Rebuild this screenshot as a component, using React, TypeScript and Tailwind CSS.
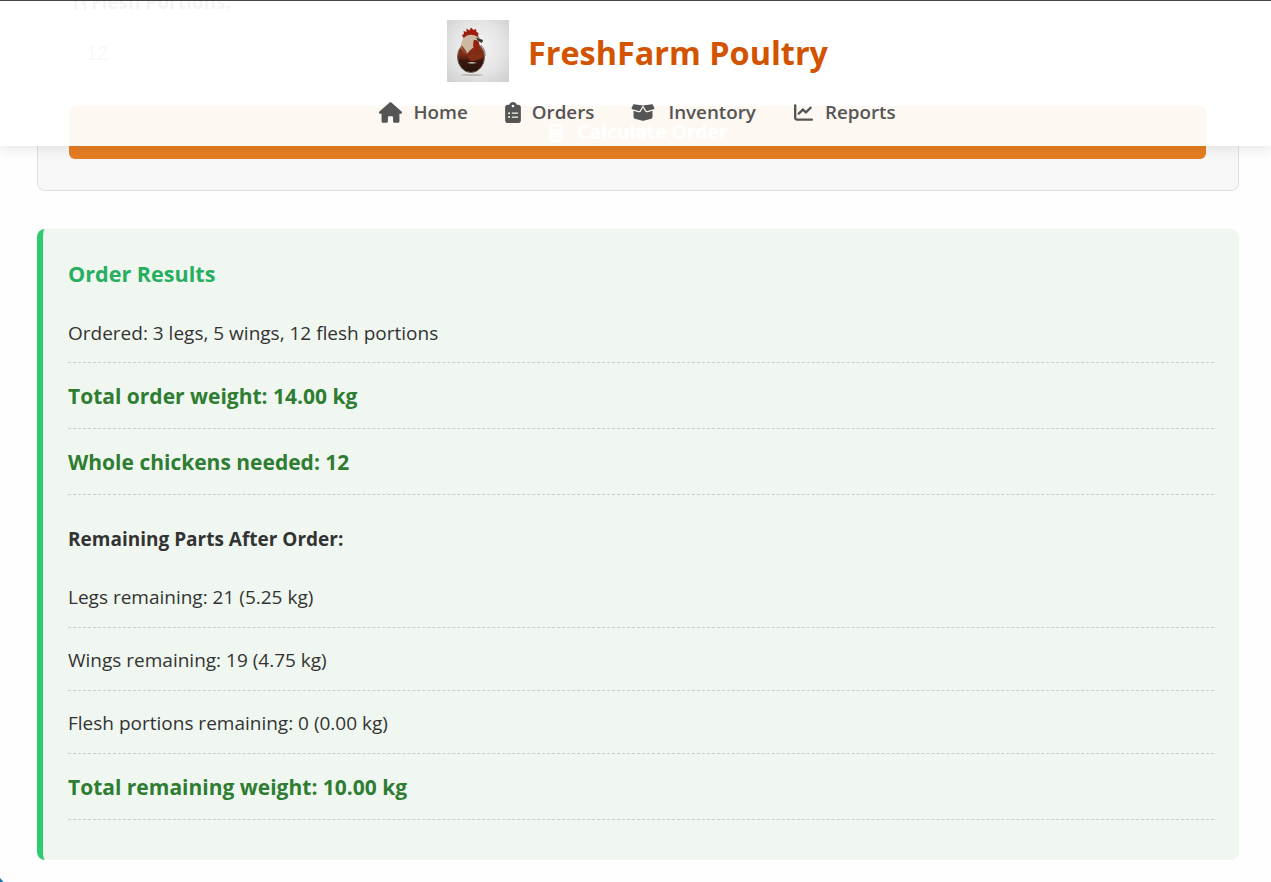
import type { ReactNode } from "react";
import { FaHouse, FaClipboardList, FaBoxOpen, FaChartLine, FaCalculator, FaUtensils } from "react-icons/fa6";

function Logo() {
  return (
    <svg width="62" height="62" viewBox="0 0 62 62" className="shrink-0">
      <defs>
        <radialGradient id="bg" cx="50%" cy="45%" r="70%">
          <stop offset="0%" stopColor="#f5f5f5" />
          <stop offset="60%" stopColor="#e4e4e4" />
          <stop offset="100%" stopColor="#d0d0d0" />
        </radialGradient>
        <linearGradient id="egg" x1="0" y1="0" x2="0" y2="1">
          <stop offset="0%" stopColor="#8f3319" />
          <stop offset="45%" stopColor="#7a2c17" />
          <stop offset="62%" stopColor="#3a1810" />
          <stop offset="100%" stopColor="#26100b" />
        </linearGradient>
        <filter id="soft"><feGaussianBlur stdDeviation="0.45" /></filter>
      </defs>
      <rect width="62" height="62" fill="url(#bg)" />
      <g filter="url(#soft)">
        <ellipse cx="25" cy="55" rx="11" ry="1.1" fill="#bdb6b2" />
        <ellipse cx="24" cy="37" rx="13.5" ry="15.5" fill="url(#egg)" stroke="#71655e" strokeWidth="0.9" />
        <path d="M15 15 L17 14 L16.5 11 L19.5 12 L19.5 8.5 L22.5 10.5 L24 7.5 L26.5 10 L29 9 L29.5 12 L31.5 13 L31 16 L33 19 L28 16 L21 16 L17 19 Z" fill="#9c1a10" />
        <path d="M19 16 C24 13.5 29 15 32 18 L30 21 L28 27 C25 28 22 31 20 34 C16 31.5 13.5 29 14 25 C14.5 21 16 18 19 16 Z" fill="#cdb8a3" />
        <path d="M14.5 25 C17 28 19 30 20.5 34 C17 33 14 30 14.5 25 Z" fill="#8a4a2c" />
        <path d="M29 17.5 L36 20 L35 23 L31 21 Z" fill="#353231" />
        <path d="M27 20 C31 19.5 33 22 32 26 C31.5 29 30 31 28.5 31 C26 29 25.5 24 27 20 Z" fill="#94200f" />
        <path d="M21 36 C26 33 32 33 37 34 C36 38 32 40 26 41 C23 41 21 39 21 36 Z" fill="#842e16" />
        <path d="M20 43 C23 41.5 26 41.5 30 43 L25 43.8 Z" fill="#c9b8a8" />
        <path d="M34 25 C37 28 38.5 32 38 36" fill="none" stroke="#7a6e68" strokeWidth="0.9" />
      </g>
    </svg>
  );
}

function NavItem({ icon, label, gap }: { icon: ReactNode; label: string; gap: string }) {
  return (
    <a className={`flex items-center ${gap} text-[18.8px] leading-none font-semibold text-[#555555]`}>
      {icon}
      <span>{label}</span>
    </a>
  );
}

export default function App() {
  return (
    <div className="relative h-[882px] w-[1271px] overflow-hidden bg-[#fefefe] font-['Open_Sans','Noto_Sans',sans-serif]">
      <header className="absolute top-0 right-0 left-0 z-10 flex h-[146px] flex-col items-center border-t border-[#444444] bg-white/95 shadow-[0_2px_14px_rgba(0,0,0,0.11)]">
        <div className="mt-[19px] ml-[4px] flex items-center gap-[19px]">
          <Logo />
          <h1 className="mt-[3px] text-[32.4px] leading-none font-bold text-[#d35400]">FreshFarm Poultry</h1>
        </div>
        <nav className="mt-[19px] ml-[4px] flex items-center gap-[37px]">
          <NavItem icon={<FaHouse className="size-[23px]" />} label="Home" gap="gap-[11px]" />
          <NavItem icon={<FaClipboardList className="h-[21px] w-[16px]" />} label="Orders" gap="gap-[11px]" />
          <NavItem icon={<FaBoxOpen className="h-[19px] w-[24px]" />} label="Inventory" gap="gap-[13px]" />
          <NavItem icon={<FaChartLine className="h-[19px] w-[21px]" />} label="Reports" gap="gap-[11px]" />
        </nav>
      </header>

      <main className="flex flex-col pr-[32px] pl-[37px]">
        <section className="-mt-[20px] flex h-[211px] flex-col rounded-b-lg border border-t-0 border-[#e0e0e0] bg-[#f8f8f8] pr-[32px] pl-[31px]">
          <label className="flex h-[47px] items-start gap-1 pt-[9px] pl-[2px] text-[19px] leading-[26px] font-bold text-[#333333]">
            <FaUtensils className="mt-[5px] size-[16px]" /> Flesh Portions:
          </label>
          <div className="flex h-[53px] items-center rounded border border-[#dddddd] bg-white px-4 pb-[2px] font-['Liberation_Sans',sans-serif] text-[20px] text-[#666666]">12</div>
          <button className="mt-[26px] flex h-[53px] items-center justify-center gap-3 rounded-md bg-[#e67e22] text-[19.2px] font-bold text-white">
            <FaCalculator className="size-[18px]" /> Calculate Order
          </button>
        </section>

        <section className="mt-[38px] flex h-[631px] flex-col rounded-lg border-l-[6px] border-[#2ecc71] bg-[#f0f7f0] pr-[25px] pl-[25px] text-[19px] text-[#333333]">
          <h3 className="mt-[30px] h-[30px] text-[21.6px] leading-[30px] font-bold text-[#27ae60]">Order Results</h3>
          <div className="mt-[13px] flex h-[61px] items-end border-b border-dashed border-[#cccccc] pb-[15px]">Ordered: 3 legs, 5 wings, 12 flesh portions</div>
          <div className="flex h-[66px] items-center border-b border-dashed border-[#cccccc] pt-[2px] text-[21px] font-bold text-[#2e7d32]">Total order weight: 14.00 kg</div>
          <div className="flex h-[66px] items-center border-b border-dashed border-[#cccccc] pt-[2px] text-[21px] font-bold text-[#2e7d32]">Whole chickens needed: 12</div>
          <div className="flex h-[75px] items-end pb-[17px] text-[19px] font-bold">Remaining Parts After Order:</div>
          <div className="flex h-[58px] items-center border-b border-dashed border-[#cccccc] pb-[2px]">Legs remaining: 21 (5.25 kg)</div>
          <div className="flex h-[63px] items-center border-b border-dashed border-[#cccccc] pt-[2px]">Wings remaining: 19 (4.75 kg)</div>
          <div className="flex h-[63px] items-center border-b border-dashed border-[#cccccc] pt-[2px]">Flesh portions remaining: 0 (0.00 kg)</div>
          <div className="flex h-[66px] items-center border-b border-dashed border-[#cccccc] pt-[2px] text-[21px] font-bold text-[#2e7d32]">Total remaining weight: 10.00 kg</div>
        </section>
      </main>

      <svg width="5" height="5" viewBox="0 0 5 5" className="absolute bottom-0 left-0">
        <path d="M0 1 L3.5 5 L0 5 Z" fill="#1c6ea4" />
      </svg>
    </div>
  );
}
